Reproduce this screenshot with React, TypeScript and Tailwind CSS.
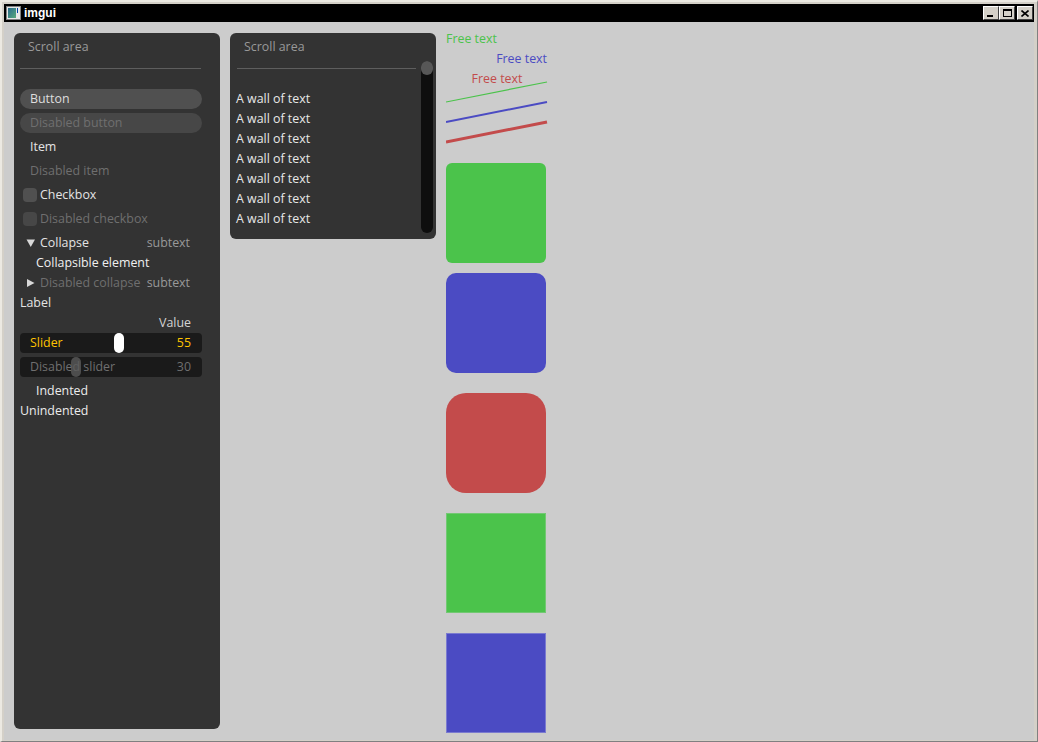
import React from 'react';

const font = { fontFamily: '"Open Sans", "Noto Sans", sans-serif' };

const Header = () => (
	<div className="h-5 pl-[14px] flex items-center text-[12.4px] text-[#999999]">Scroll area</div>
);

const Row = ({ children, className = '' }: { children: React.ReactNode; className?: string }) => (
	<div className={`h-5 flex items-center text-[12.4px] whitespace-nowrap ${className}`}>{children}</div>
);

const Slider = ({ label, value, disabled }: { label: string; value: number; disabled?: boolean }) => {
	const left = Math.floor(172 * (value / 100));
	return (
		<div className="relative h-5 rounded-[4px] bg-[#1a1a1a] flex items-center justify-between pl-[10px] pr-[11px] text-[12.4px]">
			<span className={disabled ? 'text-[#6f6f6f]' : 'text-[#ffc400]'}>{label}</span>
			<span className={disabled ? 'text-[#6f6f6f]' : 'text-[#ffc400]'}>{value}</span>
			<div
				className={`absolute top-0 h-5 w-[10px] rounded-full ${disabled ? 'bg-[#5a5a5a]/80' : 'bg-white'}`}
				style={{ left }}
			/>
		</div>
	);
};

const Triangle = ({ down }: { down?: boolean }) => (
	<svg width="10" height="10" viewBox="0 0 10 10" className="shrink-0">
		{down ? <path d="M0.5 1.5 L9 1.5 L4.75 9 Z" fill="#d8d8d8" /> : <path d="M1 1 L8.5 5 L1 9 Z" fill="#d8d8d8" />}
	</svg>
);

const WinButton = ({ children, className = '' }: { children: React.ReactNode; className?: string }) => (
	<div
		className={`w-4 h-[14px] bg-[#d4d0c8] border-t border-l border-t-white border-l-white border-b border-r border-b-[#404040] border-r-[#404040] flex items-center justify-center ${className}`}
	>
		{children}
	</div>
);

const LeftPanel = () => (
	<div className="w-[206px] h-[696px] rounded-[6px] bg-[#333333] pt-[4px] flex flex-col">
		<Header />
		<div className="mt-[11px] ml-[6px] mr-[19px] h-px bg-[#5e5e5e]" />
		<div className="mt-[20px] pl-[6px] pr-[18px] flex flex-col text-[#d8d8d8]">
			<div className="h-5 rounded-full bg-[#505050] px-[10px] flex items-center text-[12.4px] text-[#dedede]">Button</div>
			<div className="mt-1 h-5 rounded-full bg-[#474747] px-[10px] flex items-center text-[12.4px] text-[#6f6f6f]">
				Disabled button
			</div>
			<Row className="mt-1 px-[10px] text-[#e4e4e4]">Item</Row>
			<Row className="mt-1 px-[10px] text-[#6f6f6f]">Disabled item</Row>
			<Row className="mt-1 pl-[3px] gap-[3px] text-[#e4e4e4]">
				<div className="w-[14px] h-[14px] rounded-[4px] bg-[#505050]" />
				Checkbox
			</Row>
			<Row className="mt-1 pl-[3px] gap-[3px] text-[#6f6f6f]">
				<div className="w-[14px] h-[14px] rounded-[4px] bg-[#474747]" />
				Disabled checkbox
			</Row>
			<Row className="mt-1 pl-[6px] pr-[12px] gap-[4px] text-[#e4e4e4]">
				<Triangle down />
				<span>Collapse</span>
				<span className="ml-auto text-[#999999]">subtext</span>
			</Row>
			<Row className="pl-4 text-[#f0f0f0]">Collapsible element</Row>
			<Row className="pl-[6px] pr-[12px] gap-[4px] text-[#6f6f6f]">
				<Triangle />
				<span>Disabled collapse</span>
				<span className="ml-auto text-[#999999]">subtext</span>
			</Row>
			<Row className="text-[#e4e4e4]">Label</Row>
			<Row className="justify-end pr-[11px] text-[#d3d3d3]">Value</Row>
			<Slider label="Slider" value={55} />
			<div className="mt-1">
				<Slider label="Disabled slider" value={30} disabled />
			</div>
			<Row className="mt-[4px] pl-4 text-[#ececec]">Indented</Row>
			<Row className="text-[#ececec]">Unindented</Row>
		</div>
	</div>
);

const MiddlePanel = () => (
	<div className="w-[206px] h-[206px] rounded-[6px] bg-[#333333] flex">
		<div className="flex-1 pt-[4px] flex flex-col">
			<Header />
			<div className="mt-[11px] ml-[7px] mr-[2px] h-px bg-[#5e5e5e]" />
			<div className="mt-[20px] pl-[6px] flex flex-col text-[#e8e8e8]">
				{Array.from({ length: 7 }).map((_, i) => (
					<Row key={i}>A wall of text</Row>
				))}
			</div>
		</div>
		<div className="w-[12px] mt-[28px] mb-[6px] ml-[3px] mr-[3px] rounded-full bg-[#0e0e0e] flex flex-col">
			<div className="w-[12px] h-[14px] rounded-full bg-[#575757]" />
		</div>
	</div>
);

const FreeColumn = () => (
	<div className="w-[102px] -mt-[4px] flex flex-col text-[12.4px]">
		<div className="h-5 flex items-center text-[#4bc34b]">Free text</div>
		<div className="h-5 flex items-center justify-end pr-px text-[#4b4bc3]">Free text</div>
		<div className="h-5 flex items-center justify-center text-[#c34b4b]">Free text</div>
		<svg width="102" height="65" viewBox="0 0 102 65" className="-mt-[9px] shrink-0">
			<line x1="0" y1="22" x2="101" y2="2" stroke="#4bc34b" strokeWidth="1.2" />
			<line x1="0" y1="42" x2="101" y2="22" stroke="#4b4bc3" strokeWidth="2" />
			<line x1="0" y1="62" x2="101" y2="42" stroke="#c34b4b" strokeWidth="3" />
		</svg>
		<div className="mt-[18px] w-[100px] h-[100px] rounded-[6px] bg-[#4bc34b]" />
		<div className="mt-[10px] w-[100px] h-[100px] rounded-[10px] bg-[#4b4bc3]" />
		<div className="mt-[20px] w-[100px] h-[100px] rounded-[20px] bg-[#c34b4b]" />
		<div className="mt-[20px] w-[100px] h-[100px] bg-[#4bc34b] border border-[#72c872]" />
		<div className="mt-[20px] w-[100px] h-[100px] bg-[#4b4bc3] border border-[#7a7ad0]" />
	</div>
);

export default function App() {
	return (
		<div
			className="w-[1038px] h-[742px] bg-[#d4d0c8] border-t-2 border-l-2 border-t-[#ece9e2] border-l-[#ece9e2] border-b border-r border-b-[#808080] border-r-[#808080] pt-[2px] pl-[2px] pr-[3px] pb-px flex flex-col overflow-hidden"
			style={font}
		>
			<div className="h-[18px] bg-black flex items-center pl-[2px] pr-[1px] shrink-0">
				<div className="w-[15px] h-[14px] bg-[#e8e8e8] border border-[#808080] p-px flex">
					<div className="flex-1 bg-gradient-to-br from-[#2a6a8a] to-[#5aaa7a]" />
					<div className="w-[3px] flex flex-col justify-start pl-px">
						<div className="w-px h-[5px] bg-[#0044aa]" />
					</div>
				</div>
				<span
					className="ml-[3px] text-[12px] font-bold text-white"
					style={{ fontFamily: '"Liberation Sans", "DejaVu Sans", sans-serif' }}
				>
					imgui
				</span>
				<div className="ml-auto flex items-center">
					<WinButton>
						<div className="w-[6px] h-[2px] bg-black mt-[6px] -ml-[2px]" />
					</WinButton>
					<WinButton>
						<div className="w-[9px] h-[8px] border border-black border-t-2" />
					</WinButton>
					<WinButton className="ml-[2px]">
						<svg width="8" height="7" viewBox="0 0 8 7">
							<path d="M0.5 0.5 L7.5 6.5 M7.5 0.5 L0.5 6.5" stroke="black" strokeWidth="1.6" />
						</svg>
					</WinButton>
				</div>
			</div>
			<div className="flex-1 bg-[#cccccc] pt-[11px] pl-[10px] flex items-start gap-[10px] overflow-hidden">
				<LeftPanel />
				<MiddlePanel />
				<FreeColumn />
			</div>
		</div>
	);
}
